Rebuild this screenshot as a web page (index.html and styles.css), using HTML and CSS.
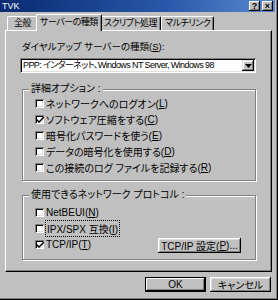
FILE: index.html
```html
<!DOCTYPE html>
<html lang="ja">
<head>
  <meta charset="UTF-8">
  <title>TVK</title>
  <link rel="stylesheet" href="styles.css">
</head>
<body>
  <div class="window">
    <div class="titlebar">
      <span class="title">TVK</span>
      <span class="tb-btn">?</span>
      <span class="tb-btn close">×</span>
    </div>

    <div class="tabs">
      <div class="tab first">全般</div>
      <div class="tab active">サーバーの種類</div>
      <div class="tab">スクリプト処理</div>
      <div class="tab">マルチリンク</div>
    </div>

    <div class="panel">
      <div class="field-label">ダイヤルアップ サーバーの種類(<u>S</u>):</div>
      <div class="combo">
        <span class="combo-text">PPP: インターネット、Windows NT Server, Windows 98</span>
        <span class="combo-btn">
          <svg width="7" height="4" viewBox="0 0 7 4"><path d="M0 0h7L3.5 4z" fill="#000"/></svg>
        </span>
      </div>

      <div class="group">
        <div class="group-title">詳細オプション :</div>
        <div class="check-row"><span class="box"></span>ネットワークへのログオン(<u>L</u>)</div>
        <div class="check-row"><span class="box checked"><svg width="7" height="7" viewBox="0 0 7 7"><path d="M0 3l2 2 5-5v2l-5 5-2-2z" fill="#000"/></svg></span>ソフトウェア圧縮をする(<u>C</u>)</div>
        <div class="check-row"><span class="box"></span>暗号化パスワードを使う(<u>E</u>)</div>
        <div class="check-row"><span class="box"></span>データの暗号化を使用する(<u>D</u>)</div>
        <div class="check-row"><span class="box"></span>この接続のログ ファイルを記録する(<u>R</u>)</div>
      </div>

      <div class="group second">
        <div class="group-title">使用できるネットワーク プロトコル :</div>
        <div class="proto">
          <div class="proto-list">
            <div class="check-row"><span class="box"></span>NetBEUI(<u>N</u>)</div>
            <div class="check-row"><span class="box"></span><span class="focus">IPX/SPX 互換(<u>I</u>)</span></div>
            <div class="check-row"><span class="box checked"><svg width="7" height="7" viewBox="0 0 7 7"><path d="M0 3l2 2 5-5v2l-5 5-2-2z" fill="#000"/></svg></span>TCP/IP(<u>T</u>)</div>
          </div>
          <div class="btn tcp">TCP/IP 設定(<u>P</u>)...</div>
        </div>
      </div>
    </div>

    <div class="buttons">
      <div class="btn default">OK</div>
      <div class="btn">キャンセル</div>
    </div>
  </div>
</body>
</html>
```

FILE: styles.css
```css
* {
    margin: 0;
    padding: 0;
    box-sizing: border-box;
}

body {
    background: #c0c0c0;
    font-family: "Liberation Sans", "Noto Sans CJK JP", sans-serif;
    font-size: 10px;
    font-feature-settings: "palt";
    color: #000;
}

/* Window frame */
.window {
    width: 278px;
    height: 300px;
    background: #c0c0c0;
    box-shadow: inset -1px -1px 0 #000, inset -2px -2px 0 #808080;
}

.titlebar {
    height: 12px;
    margin-right: 3px;
    padding: 0 2px;
    display: flex;
    align-items: center;
    gap: 1px;
    background: linear-gradient(to right, #082a72, #2858a8 60%, #5a8ad0);
    color: #fff;
}

.title {
    flex: 1;
    font-size: 9px;
    line-height: 12px;
}

.tb-btn {
    width: 11px;
    height: 10px;
    display: flex;
    align-items: center;
    justify-content: center;
    background: #c0c0c0;
    color: #000;
    font-size: 9px;
    font-weight: bold;
    line-height: 1;
    box-shadow: inset -1px -1px 0 #000, inset 1px 1px 0 #fff, inset -2px -2px 0 #808080;
}

.tb-btn.close {
    margin-left: 1px;
}

/* Tabs */
.tabs {
    display: flex;
    align-items: flex-end;
    height: 18px;
    margin-left: 7px;
    font-size: 9px;
    letter-spacing: -0.5px;
}

.tab {
    height: 14px;
    padding: 0 3px;
    line-height: 12px;
    border: 1px solid;
    border-color: #fff #000 transparent #fff;
    border-bottom: none;
    border-radius: 2px 2px 0 0;
    box-shadow: inset -1px 0 0 #808080;
    white-space: nowrap;
}

.tab.first {
    padding: 0 6px;
}

.tab.active {
    position: relative;
    z-index: 1;
    height: 17px;
    margin: 0 -2px -1px;
    padding: 1px 3px 0;
    background: #c0c0c0;
}

/* Tab panel */
.panel {
    height: 242px;
    margin: 0 6px 0 5px;
    padding: 10px 15px 0 14px;
    border: 1px solid;
    border-color: #fff #000 #000 #fff;
    box-shadow: inset -1px -1px 0 #808080;
}

.field-label {
    margin-left: 2px;
    font-size: 9.5px;
    line-height: 12px;
    white-space: nowrap;
}

.combo {
    height: 15px;
    margin-top: 5px;
    display: flex;
    align-items: center;
    background: #fff;
    box-shadow: inset 1px 1px 0 #808080, inset -1px -1px 0 #fff, inset 2px 2px 0 #000, inset -2px -2px 0 #dfdfdf;
    padding: 2px 2px 2px 3px;
}

.combo-text {
    flex: 1;
    font-size: 9px;
    letter-spacing: -0.6px;
    line-height: 11px;
    white-space: nowrap;
}

.combo-btn {
    width: 12px;
    height: 11px;
    display: flex;
    align-items: center;
    justify-content: center;
    background: #c0c0c0;
    box-shadow: inset -1px -1px 0 #000, inset 1px 1px 0 #dfdfdf, inset -2px -2px 0 #808080, inset 2px 2px 0 #fff;
}

/* Group boxes */
.group {
    margin: 16px 0 0 2px;
    padding: 0 0 5px 12px;
    border: 1px solid #808080;
    box-shadow: 1px 1px 0 #fff, inset 1px 1px 0 #fff;
}

.group.second {
    margin-top: 14px;
    padding-bottom: 7px;
}

.group-title {
    width: fit-content;
    margin: -6px 0 1px -6px;
    padding: 0 2px;
    line-height: 10px;
    background: #c0c0c0;
    white-space: nowrap;
}

.group.second .group-title {
    margin-bottom: 4px;
}

.check-row {
    height: 16px;
    display: flex;
    align-items: center;
    white-space: nowrap;
}

.box {
    width: 9px;
    height: 9px;
    margin-right: 2px;
    display: flex;
    align-items: center;
    justify-content: center;
    background: #fff;
    box-shadow: inset 1px 1px 0 #808080, inset -1px -1px 0 #fff, inset 2px 2px 0 #000, inset -2px -2px 0 #dfdfdf;
}

.box svg {
    margin: 1px 0 0 1px;
}

.focus {
    outline: 1px dotted #000;
    outline-offset: 0;
    padding: 0 1px;
}

.proto {
    display: flex;
}

.btn {
    height: 15px;
    display: flex;
    align-items: center;
    justify-content: center;
    background: #c0c0c0;
    box-shadow: inset -1px -1px 0 #000, inset 1px 1px 0 #fff, inset -2px -2px 0 #808080, inset 2px 2px 0 #dfdfdf;
    white-space: nowrap;
}

.btn.tcp {
    width: 83px;
    align-self: flex-end;
    margin: 0 14px -1px auto;
}

/* Dialog buttons */
.buttons {
    display: flex;
    justify-content: flex-end;
    gap: 4px;
    margin: 5px 7px 0 0;
}

.buttons .btn {
    width: 61px;
}

.btn.default {
    border: 1px solid #000;
    box-shadow: inset -1px -1px 0 #000, inset 1px 1px 0 #fff, inset -2px -2px 0 #808080;
}
```
